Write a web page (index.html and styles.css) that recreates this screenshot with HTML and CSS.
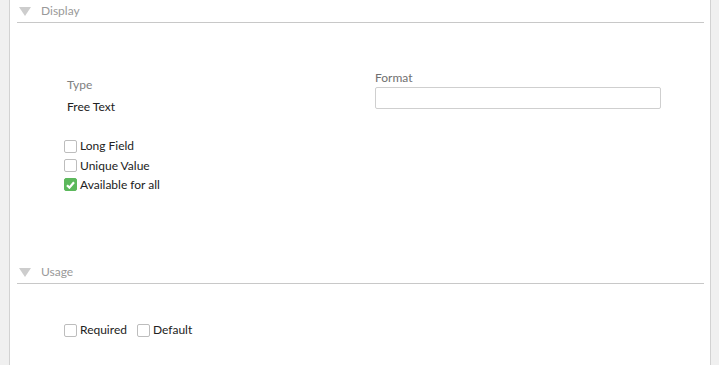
FILE: index.html
```html
<!DOCTYPE html>
<html lang="en">
<head>
    <meta charset="UTF-8">
    <title>Field settings</title>
    <link rel="stylesheet" href="styles.css">
</head>
<body>
    <div class="panel">
        <div class="section">
            <div class="section-header">
                <svg class="caret" width="12" height="9" viewBox="0 0 12 9"><path d="M0 0H12L6 9Z" fill="#cdcdcd"/></svg>
                <span class="section-title">Display</span>
            </div>
            <div class="form-row">
                <div class="col-left">
                    <div class="field-label">Type</div>
                    <div class="field-value">Free Text</div>
                </div>
                <div class="col-right">
                    <div class="field-label format-label">Format</div>
                    <input type="text" class="text-input">
                </div>
            </div>
            <div class="check-list">
                <label class="check"><span class="box"></span>Long Field</label>
                <label class="check"><span class="box"></span>Unique Value</label>
                <label class="check"><span class="box checked"><svg width="9" height="8" viewBox="0 0 9 8"><path d="M1 4.2L3.4 6.6L8 1.2" fill="none" stroke="#fff" stroke-width="2.2"/></svg></span>Available for all</label>
            </div>
        </div>

        <div class="section usage">
            <div class="section-header">
                <svg class="caret" width="12" height="9" viewBox="0 0 12 9"><path d="M0 0H12L6 9Z" fill="#cdcdcd"/></svg>
                <span class="section-title">Usage</span>
            </div>
            <div class="check-inline">
                <label class="check"><span class="box"></span>Required</label>
                <label class="check"><span class="box"></span>Default</label>
            </div>
        </div>
    </div>
</body>
</html>
```

FILE: styles.css
```css
body, html {
    margin: 0;
    padding: 0;
    height: 100%;
    background-color: #f0f0f0;
    font-family: 'Lato', 'Liberation Sans', sans-serif;
    font-size: 12px;
    color: #222;
    overflow: hidden;
}
.panel {
    margin: 0 8px 0 9px;
    height: 100%;
    background-color: #fff;
    border-left: 1px solid #d2d2d2;
    border-right: 1px solid #d2d2d2;
}
.section {
    margin: 0 6px 0 7px;
}
.section-header {
    height: 22px;
    border-bottom: 1px solid #c8c8c8;
    display: flex;
    align-items: center;
}
.caret {
    margin-left: 2px;
    margin-top: 1px;
}
.section-title {
    margin-left: 10px;
    color: #999;
    line-height: 16px;
}
.form-row {
    display: flex;
    align-items: flex-start;
    margin-top: 47px;
    padding-left: 50px;
}
.col-left {
    width: 308px;
    padding-top: 7px;
}
.col-right {
    width: 286px;
}
.field-label {
    color: #808080;
    line-height: 16px;
}
.format-label {
    color: #707070;
}
.field-value {
    margin-top: 6px;
    line-height: 16px;
    color: #222;
}
.text-input {
    display: block;
    box-sizing: border-box;
    margin: 1px 0 0 0;
    width: 286px;
    height: 22px;
    border: 1px solid #cfcfcf;
    border-radius: 2px;
    padding: 0 6px;
    font-family: inherit;
    font-size: 12px;
}
.check-list {
    margin-top: 21px;
    padding-left: 47px;
}
.check {
    display: flex;
    align-items: center;
    height: 19px;
    line-height: 16px;
    color: #222;
}
.check-list .check:first-child {
    height: 20px;
}
.box {
    box-sizing: border-box;
    width: 13px;
    height: 13px;
    border: 1px solid #bdbdbd;
    border-radius: 2px;
    background-color: #fff;
    margin-right: 3px;
    display: flex;
    justify-content: center;
    align-items: center;
}
.box.checked {
    background-color: #5cb85c;
    border-color: #5cb85c;
}
.usage {
    margin-top: 67px;
}
.check-inline {
    display: flex;
    gap: 10px;
    margin-top: 36px;
    padding-left: 47px;
}
.check-inline .check {
    height: 20px;
}
```
